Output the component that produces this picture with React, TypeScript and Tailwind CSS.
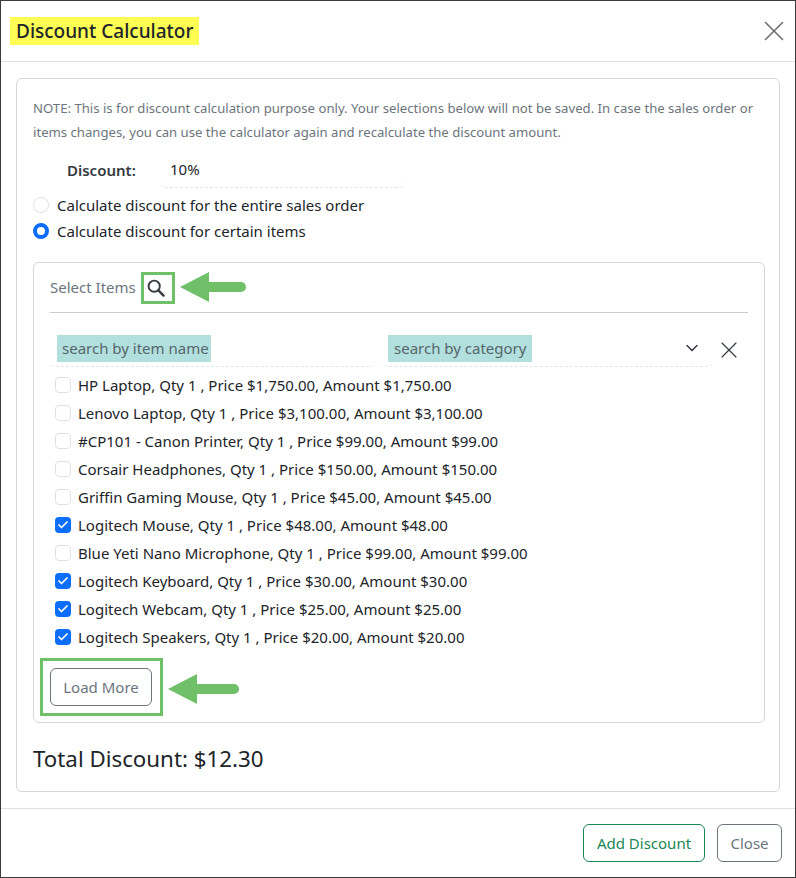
import { Check, ChevronDown, X } from 'lucide-react'

const ITEMS = [
  { label: 'HP Laptop, Qty 1 , Price $1,750.00, Amount $1,750.00', checked: false },
  { label: 'Lenovo Laptop, Qty 1 , Price $3,100.00, Amount $3,100.00', checked: false },
  { label: '#CP101 - Canon Printer, Qty 1 , Price $99.00, Amount $99.00', checked: false },
  { label: 'Corsair Headphones, Qty 1 , Price $150.00, Amount $150.00', checked: false },
  { label: 'Griffin Gaming Mouse, Qty 1 , Price $45.00, Amount $45.00', checked: false },
  { label: 'Logitech Mouse, Qty 1 , Price $48.00, Amount $48.00', checked: true },
  { label: 'Blue Yeti Nano Microphone, Qty 1 , Price $99.00, Amount $99.00', checked: false },
  { label: 'Logitech Keyboard, Qty 1 , Price $30.00, Amount $30.00', checked: true },
  { label: 'Logitech Webcam, Qty 1 , Price $25.00, Amount $25.00', checked: true },
  { label: 'Logitech Speakers, Qty 1 , Price $20.00, Amount $20.00', checked: true },
]

function Arrow({ length, className }: { length: number; className: string }) {
  const end = length - 5
  return (
    <svg className={className} width={length} height="32" viewBox={`0 0 ${length} 32`} aria-hidden="true">
      <path d={`M0 16 L29 1 L29 11 L${end} 11 A5 5 0 0 1 ${end} 21 L29 21 L29 31 Z`} fill="#70c06a" />
    </svg>
  )
}

function SearchIcon() {
  return (
    <svg width="18" height="18" viewBox="0 0 18 18" fill="none" stroke="#343a40" aria-hidden="true">
      <circle cx="7.2" cy="7.2" r="5.6" strokeWidth="1.9" />
      <path d="M11.4 11.4 L16.6 16.6" strokeWidth="2.3" strokeLinecap="round" />
    </svg>
  )
}

function ItemRow({ label, checked }: { label: string; checked: boolean }) {
  return (
    <label className="flex h-[28px] items-center">
      {checked ? (
        <span className="flex h-4 w-4 items-center justify-center rounded-[4px] bg-[#0d6efd]">
          <Check size={12} strokeWidth={3.5} className="text-white" />
        </span>
      ) : (
        <span className="h-4 w-4 rounded-[4px] border border-[#dee2e6] bg-white" />
      )}
      <span className="ml-[7px]">{label}</span>
    </label>
  )
}

export default function App() {
  return (
    <div className="flex h-[878px] w-[796px] flex-col border border-[#3a3a3a] bg-white font-['Noto_Sans',sans-serif] text-[15px] text-[#212529]">
      <header className="flex h-[61px] shrink-0 items-center justify-between border-b border-[#dee2e6] pl-[9px] pr-[4px]">
        <h1 className="bg-[#fdfd54] px-[6px] py-[1px] text-[19px] font-medium leading-[26px]">Discount Calculator</h1>
        <X size={34} strokeWidth={1.15} className="text-[#6f6f6f]" />
      </header>

      <main className="flex-1 px-[15px] pt-[16px]">
        <div className="h-[714px] rounded-[6px] border border-[#d4d6d9] px-[16px] pt-[17px]">
          <p className="text-[13.15px] leading-[24px] text-[#6c757d]">
            NOTE: This is for discount calculation purpose only. Your selections below will not be saved. In case the sales order or items changes, you can use the calculator again and recalculate the discount amount.
          </p>

          <div className="mt-[8px] flex h-[36px] items-center">
            <span className="ml-[34px] w-[94px] font-semibold text-[#343a40]">Discount:</span>
            <div className="flex h-[36px] w-[244px] items-center rounded-b-[6px] border-b border-dashed border-[#e3e5e8] pl-[9px]">10%</div>
          </div>

          <div className="mt-[4px] flex h-[26px] items-center">
            <span className="h-4 w-4 rounded-full border border-[#dee2e6] bg-white" />
            <span className="ml-[8px]">Calculate discount for the entire sales order</span>
          </div>
          <div className="flex h-[26px] items-center">
            <span className="h-4 w-4 rounded-full border-[4px] border-[#0d6efd] bg-white" />
            <span className="ml-[8px]">Calculate discount for certain items</span>
          </div>

          <section className="mt-[18px] h-[461px] w-[732px] rounded-[6px] border border-[#d4d6d9] px-[16px]">
            <div className="flex h-[50px] items-center border-b border-[#c9cbcd]">
              <span className="text-[#6c757d]">Select Items</span>
              <div className="relative ml-[5px] flex h-[32px] w-[34px] items-center justify-center border-[3px] border-[#70c06a] pr-[4px]">
                <SearchIcon />
                <Arrow length={66} className="absolute left-[36px] top-[-4px]" />
              </div>
            </div>

            <div className="mt-[20px] flex items-center">
              <div className="h-[34px] w-[326px] rounded-b-[6px] border-b border-dashed border-[#e3e5e8] pl-[7px] pt-[2px]">
                <span className="inline-block h-[27px] bg-[#b2e0de] pl-[5px] pr-[2px] leading-[27px] text-[#56666a]">search by item name</span>
              </div>
              <div className="ml-[7px] flex h-[34px] w-[330px] justify-between rounded-b-[6px] border-b border-dashed border-[#e3e5e8] pl-[5px] pr-[11px] pt-[2px]">
                <span className="inline-block h-[27px] bg-[#b2e0de] px-[6px] leading-[27px] text-[#56666a]">search by category</span>
                <ChevronDown size={20} strokeWidth={1.8} className="mt-[3px] text-[#343a40]" />
              </div>
              <X size={28} strokeWidth={1} className="ml-[2px] text-[#343a40]" />
            </div>

            <div className="ml-[5px] mt-[4px]">
              {ITEMS.map((item) => (
                <ItemRow key={item.label} label={item.label} checked={item.checked} />
              ))}
            </div>

            <div className="relative mt-[7px] w-[123px] -translate-x-[10px] border-[3px] border-[#70c06a] py-[7px] pl-[7px]">
              <button type="button" className="h-[38px] w-[102px] rounded-[6px] border border-[#6c757d] text-[#6c757d]">Load More</button>
              <Arrow length={71} className="absolute left-[125px] top-[12px]" />
            </div>
          </section>

          <p className="mt-[19px] text-[22.3px] leading-[34px]">Total Discount: $12.30</p>
        </div>
      </main>

      <footer className="flex h-[69px] shrink-0 items-center justify-end gap-[12px] border-t border-[#dee2e6] pr-[13px]">
        <button type="button" className="h-[38px] w-[122px] rounded-[6px] border border-[#198754] text-[#198754]">Add Discount</button>
        <button type="button" className="h-[38px] w-[65px] rounded-[6px] border border-[#6c757d] text-[#6c757d]">Close</button>
      </footer>
    </div>
  )
}
